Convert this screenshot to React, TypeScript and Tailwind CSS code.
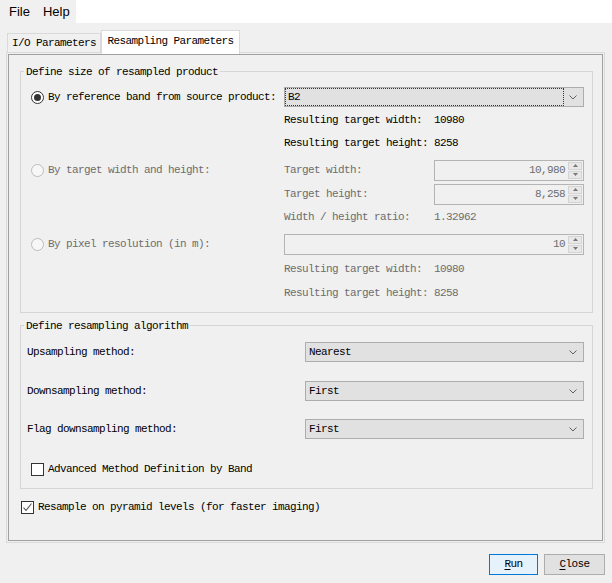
import React from 'react';
import clsx from 'clsx';

const mono = "font-['Liberation_Mono',monospace] text-[11px] leading-[13px] tracking-[-0.6px]";
const dim = 'text-[#6d6d6d]';

function Radio({ checked, disabled }: { checked?: boolean; disabled?: boolean }) {
  return (
    <span
      className={clsx(
        'flex h-[13px] w-[13px] shrink-0 items-center justify-center rounded-full border',
        disabled ? 'border-[#bcbcbc] bg-[#f7f7f7]' : 'border-[#333] bg-white'
      )}
    >
      {checked && <span className="h-[7px] w-[7px] rounded-full bg-[#333]" />}
    </span>
  );
}

function Checkbox({ checked }: { checked?: boolean }) {
  return (
    <span className="flex h-[13px] w-[13px] shrink-0 items-center justify-center border border-[#333] bg-white">
      {checked && (
        <svg width="11" height="11" viewBox="0 0 11 11">
          <path d="M1.5 5.5 L4 8.5 L9.5 1.5" stroke="#555" strokeWidth="1.1" fill="none" />
        </svg>
      )}
    </span>
  );
}

function Chevron() {
  return (
    <svg width="8" height="5" viewBox="0 0 8 5" className="shrink-0">
      <path d="M0.5 0.5 L4 4 L7.5 0.5" stroke="#606060" fill="none" />
    </svg>
  );
}

function Select({ value, focused, className }: { value: string; focused?: boolean; className?: string }) {
  return (
    <div className={clsx('flex h-[20px] items-center border border-[#adadad] bg-[#e1e1e1]', className)}>
      <div
        className={clsx(
          'flex h-full flex-1 items-center pl-[2px] text-black',
          focused ? 'border border-dotted border-[#333]' : 'pl-[3px]'
        )}
      >
        {value}
      </div>
      <div className="flex w-[19px] justify-center pr-[1px]">
        <Chevron />
      </div>
    </div>
  );
}

function Spinner({ value, className }: { value: string; className?: string }) {
  return (
    <div className={clsx('flex h-[21px] items-stretch border border-[#b4b4b4] bg-[#f0f0f0]', className)}>
      <div className={clsx('flex flex-1 items-center justify-end pr-[3px]', dim)}>{value}</div>
      <div className="my-[1px] mr-[1px] flex w-[14px] flex-col gap-[1px]">
        <div className="flex flex-1 items-center justify-center border border-[#d4d4d4] bg-[#e8e8e8]">
          <svg width="5" height="3" viewBox="0 0 5 3">
            <path d="M0 3 L2.5 0 L5 3 Z" fill="#777" />
          </svg>
        </div>
        <div className="flex flex-1 items-center justify-center border border-[#d4d4d4] bg-[#e8e8e8]">
          <svg width="5" height="3" viewBox="0 0 5 3">
            <path d="M0 0 L2.5 3 L5 0 Z" fill="#777" />
          </svg>
        </div>
      </div>
    </div>
  );
}

function GroupBox({ title, className, children }: { title: string; className?: string; children: React.ReactNode }) {
  return (
    <div className={clsx('relative border border-[#d5d5d5]', className)}>
      <span className="absolute -top-[7px] left-[3px] bg-[#f0f0f0] px-[2px] leading-[14px] text-black">{title}</span>
      {children}
    </div>
  );
}

function Row({ left, right, className }: { left?: React.ReactNode; right: React.ReactNode; className?: string }) {
  return (
    <div className={clsx('flex h-[20px] items-center', className)}>
      <div className="flex w-[263px] items-center pl-[10px]">{left}</div>
      <div className="flex flex-1 items-center">{right}</div>
    </div>
  );
}

function Pair({ label, value, disabled }: { label: string; value: string; disabled?: boolean }) {
  return (
    <div className={clsx('flex items-center', disabled ? dim : 'text-black')}>
      <span className="w-[150px]">{label}</span>
      <span>{value}</span>
    </div>
  );
}

const methods = [
  ['Upsampling method:', 'Nearest', ''],
  ['Downsampling method:', 'First', 'mt-[19px]'],
  ['Flag downsampling method:', 'First', 'mt-[18px]'],
];

export default function App() {
  return (
    <div className={clsx('h-[583px] w-[612px] overflow-hidden bg-[#f0f0f0]', mono)}>
      {/* Menu bar */}
      <div className="flex h-[23px] bg-white">
        <div className="flex w-[76px] items-center bg-[#f0f0f0] font-['Liberation_Sans',sans-serif] text-[13px] tracking-normal text-black">
          <span className="pl-[9px]">File</span>
          <span className="pl-[13px]">Help</span>
        </div>
      </div>

      {/* Tabs */}
      <div className="flex h-[29px] items-end pl-[7px]">
        <div className="flex h-[19px] w-[94px] items-center justify-center border border-b-0 border-[#d9d9d9] bg-[#f0f0f0] pt-[1px] text-black">
          I/O Parameters
        </div>
        <div className="relative z-10 -mb-[2px] flex h-[24px] w-[139px] items-start justify-center border border-b-0 border-[#d9d9d9] bg-white pt-[4px] text-black">
          Resampling Parameters
        </div>
      </div>

      {/* Tab page */}
      <div className="ml-[6px] h-[491px] w-[599px] border border-[#dadada] p-[1px]">
        <div className="flex h-full flex-col border border-[#a0a0a0]">
          <GroupBox title="Define size of resampled product" className="mt-[16px] ml-[11px] mr-[9px] pt-[15px] pb-[9px] pr-[8px]">
            <Row
              left={
                <span className="flex items-center gap-[4px] text-black">
                  <Radio checked />
                  By reference band from source product:
                </span>
              }
              right={<Select value="B2" focused className="w-full" />}
            />
            <Row className="mt-[3px]" right={<Pair label="Resulting target width:" value="10980" />} />
            <Row className="mt-[3px]" right={<Pair label="Resulting target height:" value="8258" />} />
            <Row
              className="mt-[7px]"
              left={
                <span className={clsx('flex items-center gap-[4px]', dim)}>
                  <Radio disabled />
                  By target width and height:
                </span>
              }
              right={
                <div className="flex w-full items-center justify-between">
                  <span className={dim}>Target width:</span>
                  <Spinner value="10,980" className="w-[150px]" />
                </div>
              }
            />
            <Row
              className="mt-[4px]"
              right={
                <div className="flex w-full items-center justify-between">
                  <span className={dim}>Target height:</span>
                  <Spinner value="8,258" className="w-[150px]" />
                </div>
              }
            />
            <Row className="mt-[3px]" right={<Pair label="Width / height ratio:" value="1.32962" disabled />} />
            <Row
              className="mt-[7px]"
              left={
                <span className={clsx('flex items-center gap-[4px]', dim)}>
                  <Radio disabled />
                  By pixel resolution (in m):
                </span>
              }
              right={<Spinner value="10" className="w-full" />}
            />
            <Row className="mt-[5px]" right={<Pair label="Resulting target width:" value="10980" disabled />} />
            <Row className="mt-[4px]" right={<Pair label="Resulting target height:" value="8258" disabled />} />
          </GroupBox>

          <GroupBox title="Define resampling algorithm" className="mt-[12px] ml-[11px] mr-[9px] pt-[16px] pb-[9px] pr-[8px]">
            {methods.map(([label, value, gap]) => (
              <div key={label} className={clsx('flex h-[20px] items-center', gap)}>
                <span className="w-[284px] pl-[6px] text-black">{label}</span>
                <Select value={value} className="flex-1" />
              </div>
            ))}
            <div className="mt-[20px] flex h-[20px] items-center gap-[4px] pl-[10px] text-black">
              <Checkbox />
              Advanced Method Definition by Band
            </div>
          </GroupBox>

          <div className="mt-[8px] flex h-[20px] items-center gap-[4px] pl-[12px] text-black">
            <Checkbox checked />
            Resample on pyramid levels (for faster imaging)
          </div>
        </div>
      </div>

      {/* Buttons */}
      <div className="mt-[11px] flex justify-end gap-[6px] pr-[7px]">
        <button className="flex h-[21px] w-[49px] items-center justify-center border border-[#0078d7] bg-[#e5f1fb] text-black">
          <span className="underline underline-offset-2">R</span>un
        </button>
        <button className="flex h-[21px] w-[61px] items-center justify-center border border-[#adadad] bg-[#e1e1e1] text-black">
          <span className="underline underline-offset-2">C</span>lose
        </button>
      </div>
    </div>
  );
}
